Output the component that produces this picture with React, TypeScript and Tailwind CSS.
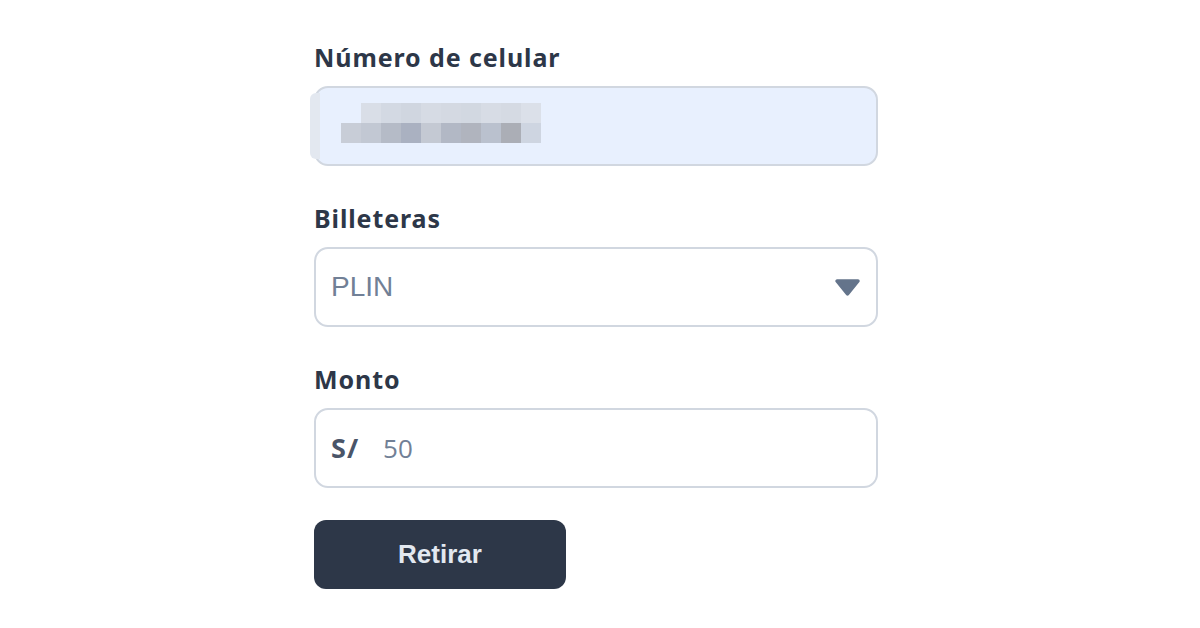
import React from "react";

const mosaicTop = ["#d9dee7", "#d3d9e3", "#d0d6e0", "#d6dbe4", "#d4d9e2", "#d2d8e1", "#d7dce5", "#d5dae3", "#dbe0e9"];
const mosaicBottom = ["#c8cdd7", "#c2c8d3", "#b5bbc7", "#aab1c1", "#c4c9d3", "#b2b8c5", "#b0b4be", "#bac1ce", "#abaeb6", "#ced5e1"];

function Label({ children }: { children: React.ReactNode }) {
  return (
    <div className="font-['Noto_Sans',sans-serif] font-bold text-[25px] leading-[32px] tracking-[0.9px] text-[#2d3748] mb-[13px]">
      {children}
    </div>
  );
}

export default function App() {
  return (
    <div className="w-[1200px] h-[628px] bg-white overflow-hidden">
      <div className="ml-[314px] w-[564px] pt-[41px] flex flex-col">
        <Label>Número de celular</Label>
        <div className="relative h-[80px] rounded-[14px] border-2 border-[#d1d7e0] bg-[#e8f0fe] flex flex-col justify-center pl-[24px] pb-[6px]">
          <div className="absolute left-[-6px] top-[5px] bottom-[5px] w-[10px] bg-[#e3e8f0] rounded-l-[6px]" />
          <div className="flex ml-[21px]">
            {mosaicTop.map((c, i) => (
              <div key={i} className="w-[20px] h-[20px]" style={{ backgroundColor: c }} />
            ))}
          </div>
          <div className="flex ml-[1px]">
            {mosaicBottom.map((c, i) => (
              <div key={i} className="w-[20px] h-[20px]" style={{ backgroundColor: c }} />
            ))}
          </div>
        </div>

        <div className="mt-[36px]">
          <Label>Billeteras</Label>
        </div>
        <div className="h-[80px] rounded-[14px] border-2 border-[#d1d7e0] bg-white flex items-center justify-between pl-[15px] pr-[15px]">
          <span className="font-['Liberation_Sans',sans-serif] text-[28px] text-[#718096]">PLIN</span>
          <svg width="27" height="19" viewBox="0 0 27 19">
            <path d="M3 3 L24 3 L13.5 16 Z" fill="#64748b" stroke="#64748b" strokeWidth="3.5" strokeLinejoin="round" />
          </svg>
        </div>

        <div className="mt-[36px]">
          <Label>Monto</Label>
        </div>
        <div className="h-[80px] rounded-[14px] border-2 border-[#d1d7e0] bg-white flex items-center pl-[15px]">
          <span className="font-['Noto_Sans',sans-serif] font-bold text-[27px] tracking-[1px] text-[#4a5568]">S/</span>
          <span className="ml-[24px] font-['Open_Sans',sans-serif] text-[26px] text-[#718096]">50</span>
        </div>

        <button className="mt-[32px] w-[252px] h-[69px] rounded-[12px] bg-[#2d3748] font-['Liberation_Sans',sans-serif] font-bold text-[26px] text-[#e2e8f0]">
          Retirar
        </button>
      </div>
    </div>
  );
}
